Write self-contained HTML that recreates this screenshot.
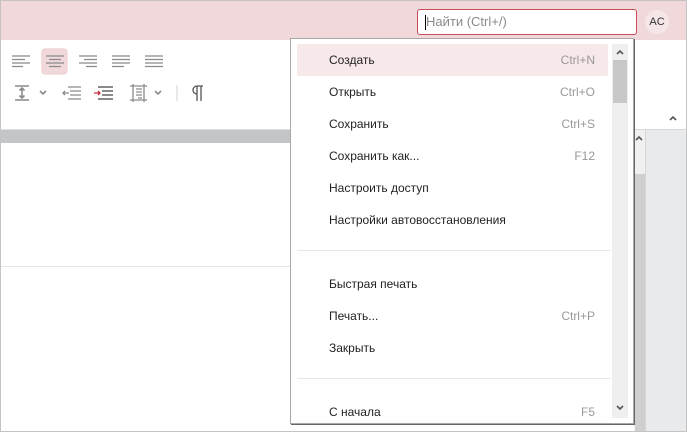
<!DOCTYPE html>
<html><head><meta charset="utf-8"><style>
*{margin:0;padding:0;box-sizing:border-box}
body{width:687px;height:432px;overflow:hidden;background:#fff;font-family:"Liberation Sans",sans-serif;position:relative}
.frame{position:absolute;left:0;top:0;width:687px;height:432px;border:1px solid #c4c4c4;pointer-events:none;z-index:20}
.top{position:absolute;left:0;top:0;width:687px;height:40px;background:#f1d9db}
.search{position:absolute;left:417px;top:9px;width:220px;height:26px;background:#fff;border:1px solid #c94c5a;border-radius:3px;font-size:13px;color:#8a8a8a;padding:4px 0 0 8px}
.search:before{content:"";position:absolute;left:7px;top:5px;width:1px;height:15px;background:#000}
.av{position:absolute;left:645px;top:10px;width:24px;height:24px;border-radius:50%;background:#f5e6e7;font-size:11px;color:#333;text-align:center;line-height:24px}
.gray{position:absolute;left:1px;top:129px;width:290px;height:14px;background:#c3c6c8;border-top:1px solid #e0e0e0}
.hline{position:absolute;left:1px;top:266px;width:290px;height:1px;background:#e6e6e6}
.rt{position:absolute;left:634px;top:129px;width:53px;height:303px;background:#e9eaeb;border-top:1px solid #d8d8d8}
.rcol{position:absolute;left:634px;top:130px;width:12px;height:302px;background:#f0f0f0;border-right:1px solid #d6d6d6}
.rthumb{position:absolute;left:635px;top:174px;width:10px;height:258px;background:#cfcfcf}
.menu{position:absolute;left:290px;top:38px;width:344px;height:386px;background:#fff;border:1px solid #a8a8a8;box-shadow:1px 1px 0 #666;z-index:10}
.it{position:absolute;left:6px;width:311px;height:32px;font-size:12px;color:#222;padding-left:32px;line-height:32px}
.it span{position:absolute;right:13px;color:#999}
.sel{background:#f7e8e9;border-radius:2px}
.sep{position:absolute;left:6px;width:314px;height:1px;background:#e8e8e8}
.sb{position:absolute;left:321px;top:5px;width:16px;height:374px;background:#efefef}
.th{position:absolute;left:322px;top:21px;width:14px;height:43px;background:#c8c8c8}
svg.c{position:absolute}
</style></head><body>
<div class="top"></div>
<div class="search">Найти (Ctrl+/)</div>
<div class="av">AC</div>
<svg style="position:absolute;left:0;top:40px" width="290" height="80" stroke="#8a8a8a" stroke-width="1.3" fill="none">
<rect x="42" y="9" width="25" height="25" rx="3" fill="#f1d9db" stroke="#f0d2d5"/>
<path d="M12 16h18M12 19.5h13M12 23h18M12 26.5h11"/>
<path d="M46 16h18M49 19.5h12M46 23h18M49 26.5h12"/>
<path d="M79 16h18M84 19.5h13M79 23h18M86 26.5h11"/>
<path d="M112 16h18M112 19.5h18M112 23h18M112 26.5h12"/>
<path d="M145 16h18M145 19.5h18M145 23h18M145 26.5h18"/>
<path d="M15 46h14M15 60h14M22 48v10M19.5 50.5l2.5-2.5 2.5 2.5M19.5 55.5l2.5 2.5 2.5-2.5" stroke-width="1.6"/>
<path d="M40 51l3 3 3-3M155 51l3 3 3-3" stroke-width="1.6"/>
<path d="M68 47h13M70 51h11M70 55h11M68 59h13M63 53h6M65 51l-2 2 2 2"/>
<path d="M98 47h15M102 51h11M102 55h11M98 59h15" stroke="#444"/>
<path d="M94 53h6M98 51l2 2-2 2" stroke="#c0303e"/>
<path d="M130 46h17M130 60h17M133 44v18M144 44v18M136 49h6M136 52h6M136 55h6M138 58h4"/>
<path d="M177 45v16" stroke="#ddd"/>
<path d="M197 61V46M201 61V46M197 46h6M197 46a4 4 0 0 0 0 8" stroke="#555"/>
</svg>
<div class="gray"></div>
<div class="hline"></div>
<div class="rt"></div>
<div class="rcol"></div>
<div class="rthumb"></div>
<svg class="c" style="left:669px;top:115px" width="8" height="6"><path d="M1 5l3-3 3 3" stroke="#555" stroke-width="1.6" fill="none"/></svg>
<svg class="c" style="left:635px;top:135px" width="8" height="6"><path d="M1 5l3-3 3 3" stroke="#555" stroke-width="1.6" fill="none"/></svg>
<div class="menu">
<div class="it sel" style="top:5px">Создать<span>Ctrl+N</span></div>
<div class="it" style="top:37px">Открыть<span>Ctrl+O</span></div>
<div class="it" style="top:69px">Сохранить<span>Ctrl+S</span></div>
<div class="it" style="top:101px">Сохранить как...<span>F12</span></div>
<div class="it" style="top:133px">Настроить доступ</div>
<div class="it" style="top:165px">Настройки автовосстановления</div>
<div class="sep" style="top:211px"></div>
<div class="it" style="top:229px">Быстрая печать</div>
<div class="it" style="top:261px">Печать...<span>Ctrl+P</span></div>
<div class="it" style="top:293px">Закрыть</div>
<div class="sep" style="top:339px"></div>
<div class="it" style="top:357px">С начала<span>F5</span></div>
<div class="sb"></div>
<div class="th"></div>
<svg class="c" style="left:325px;top:10px" width="8" height="6"><path d="M1 5l3-3 3 3" stroke="#555" stroke-width="1.6" fill="none"/></svg>
<svg class="c" style="left:325px;top:366px" width="8" height="6"><path d="M1 1l3 3 3-3" stroke="#555" stroke-width="1.6" fill="none"/></svg>
</div>
<div class="frame"></div>
</body></html>
